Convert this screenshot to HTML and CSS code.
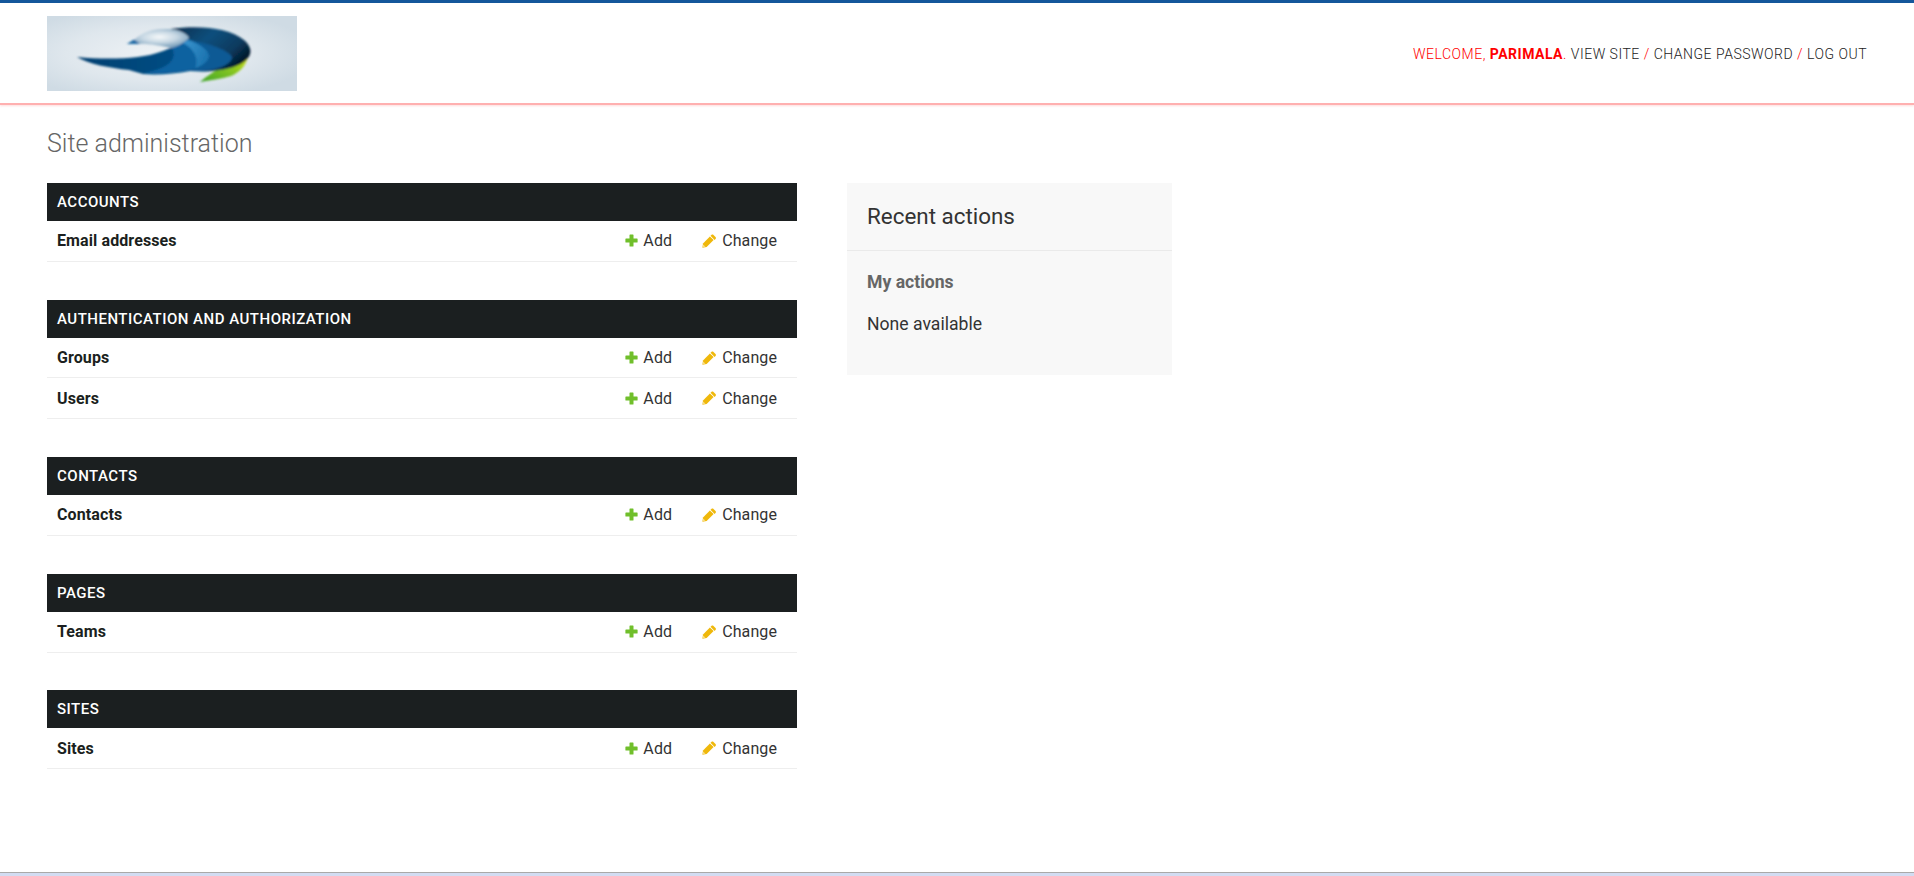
FILE: index.html
```html
<!DOCTYPE html>
<html lang="en">
<head>
  <meta charset="UTF-8" />
  <title>Site administration</title>
  <link rel="stylesheet" href="styles.css">
</head>
<body>
  <svg class="defs" width="0" height="0" aria-hidden="true">
    <symbol id="icon-add" viewBox="0 0 13 13">
      <path d="M5.1.4h2.8c.4 0 .6.2.6.6v3.5H12c.4 0 .6.2.6.6v2.8c0 .4-.2.6-.6.6H8.500V12c0 .4-.2.6-.6.6H5.100c-.4 0-.6-.2-.6-.6V8.500H1c-.4 0-.6-.2-.6-.6V5.100c0-.4.2-.6.6-.6h3.500V1c0-.4.2-.6.6-.6z" fill="#70bf2b"/>
    </symbol>
    <symbol id="icon-change" viewBox="0 0 14 14">
      <path d="M9.400.9c.6-.6 1.500-.6 2.100 0l2 2c.6.6.6 1.500 0 2.100l-.9.9-4.100-4.100z" fill="#efb80b"/>
      <path d="M7.900 2.400l3.700 3.700-7 7-4.200.6.6-4.200z" fill="#efb80b"/>
      <path d="M1.200 10.600l2.200 2.200-2.500.3z" fill="#fbe08a"/>
    </symbol>
  </svg>

  <header class="site-header">
    <svg class="logo" viewBox="0 0 250 75" role="img" aria-label="Logo">
      <defs>
        <radialGradient id="logoBg" cx="45%" cy="50%" r="62%">
          <stop offset="0" stop-color="#eef2f5"/>
          <stop offset="0.6" stop-color="#dfe7ed"/>
          <stop offset="1" stop-color="#cfdbe4"/>
        </radialGradient>
        <radialGradient id="logoHead" cx="52%" cy="42%" r="52%">
          <stop offset="0" stop-color="#f6f9fa"/>
          <stop offset="0.55" stop-color="#c6d7e3"/>
          <stop offset="1" stop-color="#7fa3be"/>
        </radialGradient>
        <linearGradient id="logoDark" x1="0" y1="0" x2="1" y2="0.6">
          <stop offset="0" stop-color="#0a2c4a"/>
          <stop offset="0.45" stop-color="#104f7d"/>
          <stop offset="0.8" stop-color="#0a3a5e"/>
          <stop offset="1" stop-color="#02182a"/>
        </linearGradient>
        <linearGradient id="logoGreen" x1="0" y1="1" x2="1" y2="0">
          <stop offset="0" stop-color="#3ea52a"/>
          <stop offset="0.6" stop-color="#8cc81f"/>
          <stop offset="1" stop-color="#dbe31a"/>
        </linearGradient>
        <linearGradient id="logoWing" x1="0" y1="0" x2="1" y2="0">
          <stop offset="0" stop-color="#033f70"/>
          <stop offset="1" stop-color="#07528a"/>
        </linearGradient>
        <linearGradient id="logoLight" x1="0" y1="0" x2="1" y2="0.5">
          <stop offset="0" stop-color="#3a94ce"/>
          <stop offset="1" stop-color="#1c74b0"/>
        </linearGradient>
        <filter id="logoSoft"><feGaussianBlur stdDeviation="0.8"/></filter>
      </defs>
      <rect width="250" height="75" fill="url(#logoBg)"/>
      <g filter="url(#logoSoft)">
        <path d="M153 66 C160 60 166 56 171 53 L201 40 C199 50 193 56 184 60 C174 63 163 64 153 66z" fill="url(#logoGreen)"/>
        <path d="M123 13 C150 9 182 11 197 24 C205 31 205 38 200 43 C192 52 170 57 143 55 L141 22z" fill="url(#logoDark)"/>
        <path d="M141 24 C160 27 180 33 185 41 C185 48 170 56 143 55z" fill="#085a95"/>
        <path d="M30 41 C60 44 95 43 113 36 C125 32 135 27 141 23 L161 37 C163 46 155 52 143 55 C128 58 110 59 96 58 L82 54 C62 52 42 48 30 41z" fill="url(#logoWing)"/>
        <path d="M125 32 C131 29 137 26 141 23 C152 27 161 33 162 40 C161 47 153 52 143 54 C128 57 112 58 96 57 C118 54 132 44 125 32z" fill="#0b62a0"/>
        <path d="M136 27 L141 24 C152 28 161 33 162 40 C161 46 155 50 148 52 C152 44 148 33 136 27z" fill="url(#logoLight)"/>
        <path d="M80 28 L87 24 C95 16 106 13 120 13 C132 13 141 18 142 22 C137 27 130 31 124 32 C114 30 100 27 90 28z" fill="url(#logoHead)"/>
        <path d="M80 28 L87 23.500 L93 28z" fill="#1b6aa5"/>
      </g>
    </svg>
    <nav class="user-tools">
      <span class="welcome">Welcome, <strong>Parimala</strong>.</span>
      <a href="#">View site</a> <span class="sep">/</span>
      <a href="#">Change password</a> <span class="sep">/</span>
      <a href="#">Log out</a>
    </nav>
  </header>

  <main class="content">
    <h1 class="page-title">Site administration</h1>
    <div class="columns">
      <div class="modules">
        <section class="module">
          <h2 class="module-title">Accounts</h2>
          <div class="row"><a class="row-name" href="#">Email addresses</a><a class="action add" href="#"><svg class="icon-add"><use href="#icon-add"/></svg>Add</a><a class="action change" href="#"><svg class="icon-change"><use href="#icon-change"/></svg>Change</a></div>
        </section>
        <section class="module">
          <h2 class="module-title">Authentication and Authorization</h2>
          <div class="row"><a class="row-name" href="#">Groups</a><a class="action add" href="#"><svg class="icon-add"><use href="#icon-add"/></svg>Add</a><a class="action change" href="#"><svg class="icon-change"><use href="#icon-change"/></svg>Change</a></div>
          <div class="row"><a class="row-name" href="#">Users</a><a class="action add" href="#"><svg class="icon-add"><use href="#icon-add"/></svg>Add</a><a class="action change" href="#"><svg class="icon-change"><use href="#icon-change"/></svg>Change</a></div>
        </section>
        <section class="module">
          <h2 class="module-title">Contacts</h2>
          <div class="row"><a class="row-name" href="#">Contacts</a><a class="action add" href="#"><svg class="icon-add"><use href="#icon-add"/></svg>Add</a><a class="action change" href="#"><svg class="icon-change"><use href="#icon-change"/></svg>Change</a></div>
        </section>
        <section class="module">
          <h2 class="module-title">Pages</h2>
          <div class="row"><a class="row-name" href="#">Teams</a><a class="action add" href="#"><svg class="icon-add"><use href="#icon-add"/></svg>Add</a><a class="action change" href="#"><svg class="icon-change"><use href="#icon-change"/></svg>Change</a></div>
        </section>
        <section class="module">
          <h2 class="module-title">Sites</h2>
          <div class="row"><a class="row-name" href="#">Sites</a><a class="action add" href="#"><svg class="icon-add"><use href="#icon-add"/></svg>Add</a><a class="action change" href="#"><svg class="icon-change"><use href="#icon-change"/></svg>Change</a></div>
        </section>
      </div>

      <aside class="recent">
        <h2 class="recent-title">Recent actions</h2>
        <div class="recent-body">
          <h3 class="recent-sub">My actions</h3>
          <p class="recent-none">None available</p>
        </div>
      </aside>
    </div>
  </main>

  <footer class="site-footer"></footer>
</body>
</html>
```

FILE: styles.css
```css
* {
  box-sizing: border-box;
}

html, body {
  height: 100%;
}

body {
  margin: 0;
  display: flex;
  flex-direction: column;
  font-family: Roboto, "Liberation Sans", sans-serif;
  font-size: 16px;
  color: #333;
  background: #fff;
  overflow: hidden;
}

a {
  color: inherit;
  text-decoration: none;
}

.defs {
  position: absolute;
}

.site-header {
  height: 105px;
  flex: none;
  display: flex;
  align-items: center;
  justify-content: space-between;
  padding: 13px 47px 12px;
  border-top: 3px solid #14579b;
  border-bottom: 2px solid #ffb0b0;
  box-shadow: 0 1px 2px rgba(255, 170, 170, 0.4);
}

.logo {
  display: block;
  width: 250px;
  height: 75px;
}

.user-tools {
  font-size: 14px;
  font-weight: 300;
  letter-spacing: 0.5px;
  text-transform: uppercase;
  color: #222;
}

.welcome, .sep {
  color: #f00;
}

.welcome strong {
  font-weight: 700;
}

.content {
  flex: 1;
  padding: 0 47px;
}

.page-title {
  margin: 0;
  padding-top: 24px;
  height: 78px;
  font-size: 25px;
  line-height: 30px;
  font-weight: 300;
  color: #666;
}

.columns {
  display: flex;
  gap: 50px;
  align-items: flex-start;
}

.modules {
  width: 750px;
}

.module {
  margin-bottom: 37.7px;
}

.module-title {
  margin: 0;
  height: 38px;
  padding: 0 10px;
  font-size: 15px;
  line-height: 38px;
  font-weight: 500;
  letter-spacing: 0.5px;
  text-transform: uppercase;
  color: #fff;
  background: #1b1f20;
}

.row {
  height: 40.9px;
  display: flex;
  align-items: center;
  padding: 0 20px 0 10px;
  border-bottom: 1px solid #eee;
  letter-spacing: 0.1px;
}

.row-name {
  flex: 1;
  font-weight: 700;
  color: #1b1f20;
}

.action {
  display: flex;
  align-items: center;
  color: #333;
}

.add {
  margin-right: 30px;
}

.icon-add {
  width: 13px;
  height: 13px;
  margin-right: 5px;
}

.icon-change {
  width: 14px;
  height: 14px;
  margin-right: 6px;
}

.recent {
  width: 325px;
  height: 192px;
  background: #f8f8f8;
}

.recent-title {
  margin: 0;
  height: 68px;
  padding: 0 20px;
  font-size: 22.4px;
  line-height: 67px;
  font-weight: 400;
  color: #333;
  border-bottom: 1px solid #eaeaea;
}

.recent-body {
  padding: 20px;
}

.recent-sub {
  margin: 0 0 20px;
  font-size: 17.6px;
  line-height: 22px;
  font-weight: 700;
  color: #666;
}

.recent-none {
  margin: 0;
  font-size: 17.6px;
  line-height: 22px;
}

.site-footer {
  flex: none;
  height: 4px;
  background: #d2dcf2;
  border-top: 1px solid #a9a9a9;
}
```
